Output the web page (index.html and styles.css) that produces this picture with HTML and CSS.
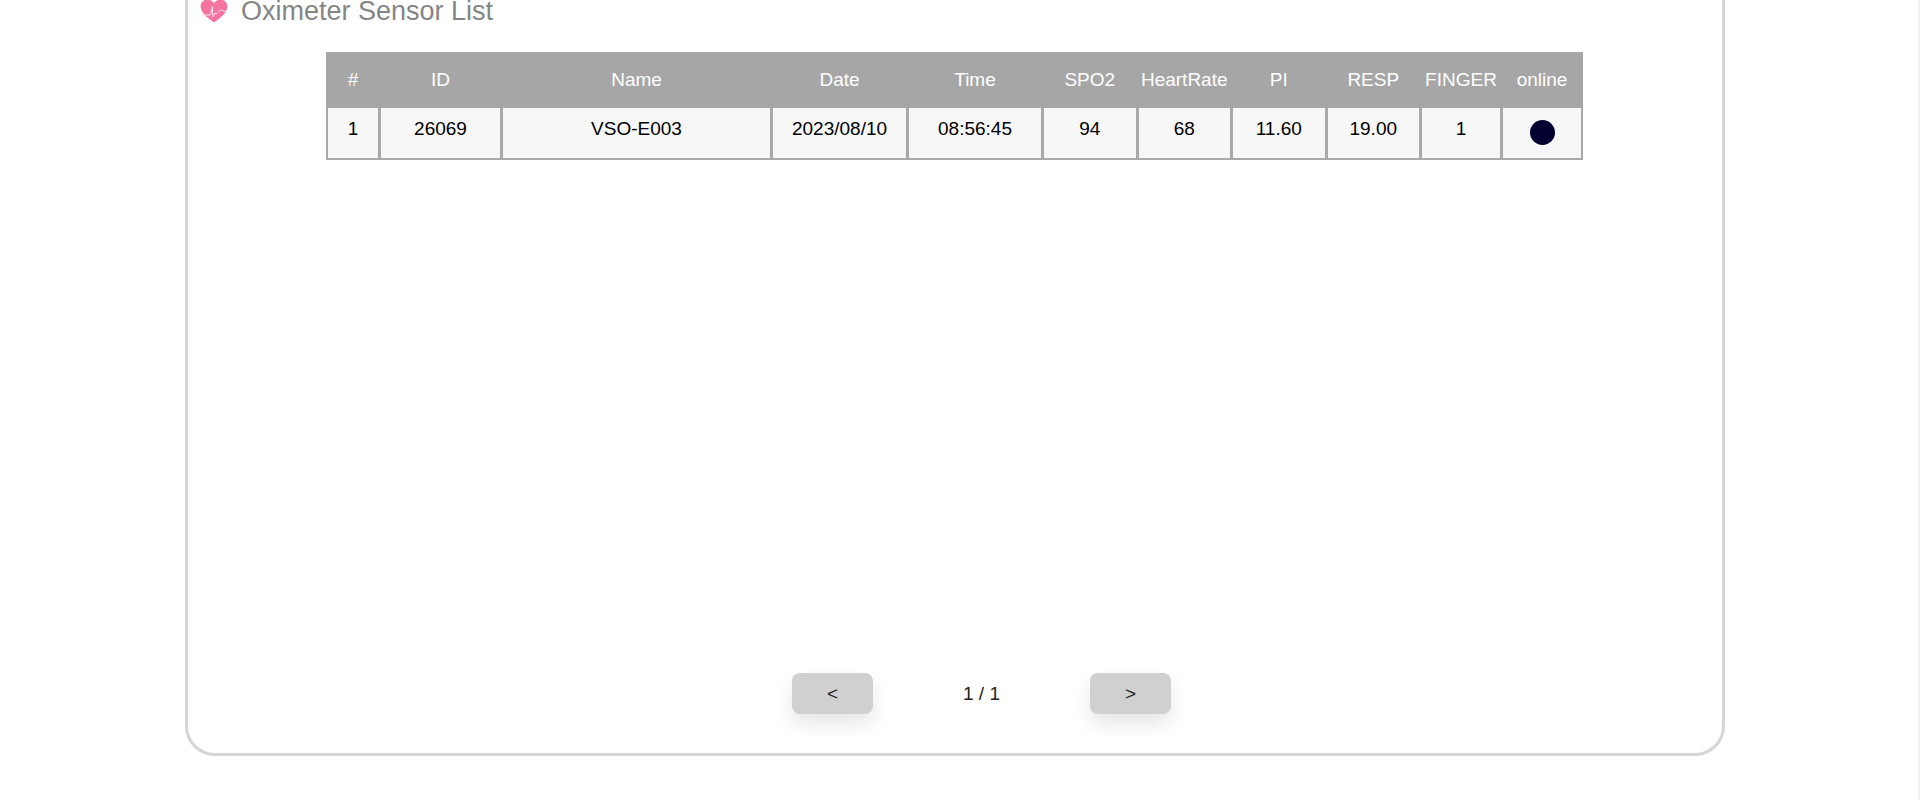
FILE: index.html
```html
<!DOCTYPE html>
<html lang="en">
<head>
<meta charset="utf-8">
<title>Oximeter Sensor List</title>
<link rel="stylesheet" href="styles.css">
</head>
<body>
<main class="card">
  <h1 class="title">
    <svg class="heart" viewBox="0 0 28 24" width="28" height="24" aria-hidden="true">
      <path class="heart-fill" d="M14 23.500C10 20.500 1 15 .6 7.800.3 3.400 3.600.6 7.300.6c2.800 0 5.200 1.400 6.700 3.600C15.500 2 17.900.6 20.700.6c3.700 0 7 2.800 6.700 7.200C27 15 18 20.500 14 23.500Z"/>
      <path class="heart-line" d="M1.500 16H10l1-2 1.300-6.500L13 18l1.500-3.500h2c1.500-.5 2.500-4 5.500-3.500 1.500.5 2.500 2 4 2"/>
    </svg>
    Oximeter Sensor List
  </h1>
  <div class="table-wrap">
    <table class="sensors">
      <colgroup>
        <col class="c-no"><col class="c-id"><col class="c-name"><col class="c-date"><col class="c-time"><col class="c-num"><col class="c-num"><col class="c-num"><col class="c-num"><col class="c-finger"><col class="c-online">
      </colgroup>
      <thead>
        <tr><th>#</th><th>ID</th><th>Name</th><th>Date</th><th>Time</th><th>SPO2</th><th>HeartRate</th><th>PI</th><th>RESP</th><th>FINGER</th><th>online</th></tr>
      </thead>
      <tbody>
        <tr><td>1</td><td>26069</td><td>VSO-E003</td><td>2023/08/10</td><td>08:56:45</td><td>94</td><td>68</td><td>11.60</td><td>19.00</td><td>1</td><td class="online-cell"><span class="dot"></span></td></tr>
      </tbody>
    </table>
  </div>
  <nav class="pager">
    <button class="page-btn" type="button">&lt;</button>
    <span class="page-label">1 / 1</span>
    <button class="page-btn" type="button">&gt;</button>
  </nav>
</main>
</body>
</html>
```
FILE: styles.css
```css
* { box-sizing: border-box; }
html, body { height: 100%; }
body {
  margin: 0;
  height: 800px;
  overflow: hidden;
  background: #fff;
  font-family: "Liberation Sans", Arial, sans-serif;
  border-right: 2px solid #f1f1f1;
}
.card {
  width: 1540px;
  height: 806px;
  margin: -50px 0 0 185px;
  border: 3px solid #d6d6d6;
  border-radius: 30px;
  padding: 42px 0 0;
  display: flex;
  flex-direction: column;
}
.title {
  margin: 0;
  padding-left: 12px;
  height: 32px;
  display: flex;
  align-items: center;
  gap: 13px;
  font-size: 27px;
  font-weight: 400;
  color: #858585;
}
.heart { flex: none; }
.heart-fill { fill: #f4749f; }
.heart-line { fill: none; stroke: #fde3ea; stroke-width: 1; }
.table-wrap { padding: 25px 0 0 138px; }
.sensors {
  table-layout: fixed;
  border-collapse: separate;
  border-spacing: 0;
  width: 1257px;
  font-size: 19px;
  color: #000;
}
.c-no { width: 55px; }
.c-id { width: 122px; }
.c-name { width: 270px; }
.c-date { width: 136px; }
.c-time { width: 135px; }
.c-num { width: 94.500px; }
.c-finger { width: 81px; }
.c-online { width: 80px; }
.sensors th {
  height: 56px;
  background: #a6a6a6;
  border-right: 3px solid #a6a6a6;
  color: #fff;
  font-weight: 400;
  padding: 0;
}
.sensors th:first-child { border-left: 2px solid #a6a6a6; }
.sensors th:last-child { border-right-width: 2px; }
.sensors td {
  height: 52px;
  background: #f7f7f7;
  border-right: 3px solid #a9a9a9;
  border-bottom: 2px solid #a9a9a9;
  padding: 10px 0 0;
  text-align: center;
  vertical-align: top;
}
.sensors td:first-child { border-left: 2px solid #a9a9a9; }
.sensors td:last-child { border-right-width: 2px; }
.sensors td.online-cell { padding: 12px 0 0; }
.dot {
  display: block;
  width: 25px;
  height: 25px;
  margin: 0 auto;
  border-radius: 50%;
  background: #03012f;
}
.pager {
  margin: auto 0 0;
  padding: 0 0 39px 604px;
  display: flex;
  align-items: center;
}
.page-btn {
  width: 81px;
  height: 41px;
  border: 0;
  border-radius: 8px;
  background: #d0d0d0;
  color: #222;
  font: 19px "Liberation Sans", Arial, sans-serif;
  box-shadow: 0 10px 20px rgba(0,0,0,.1);
}
.page-label {
  width: 217px;
  text-align: center;
  font-size: 19px;
  color: #222;
}
```
